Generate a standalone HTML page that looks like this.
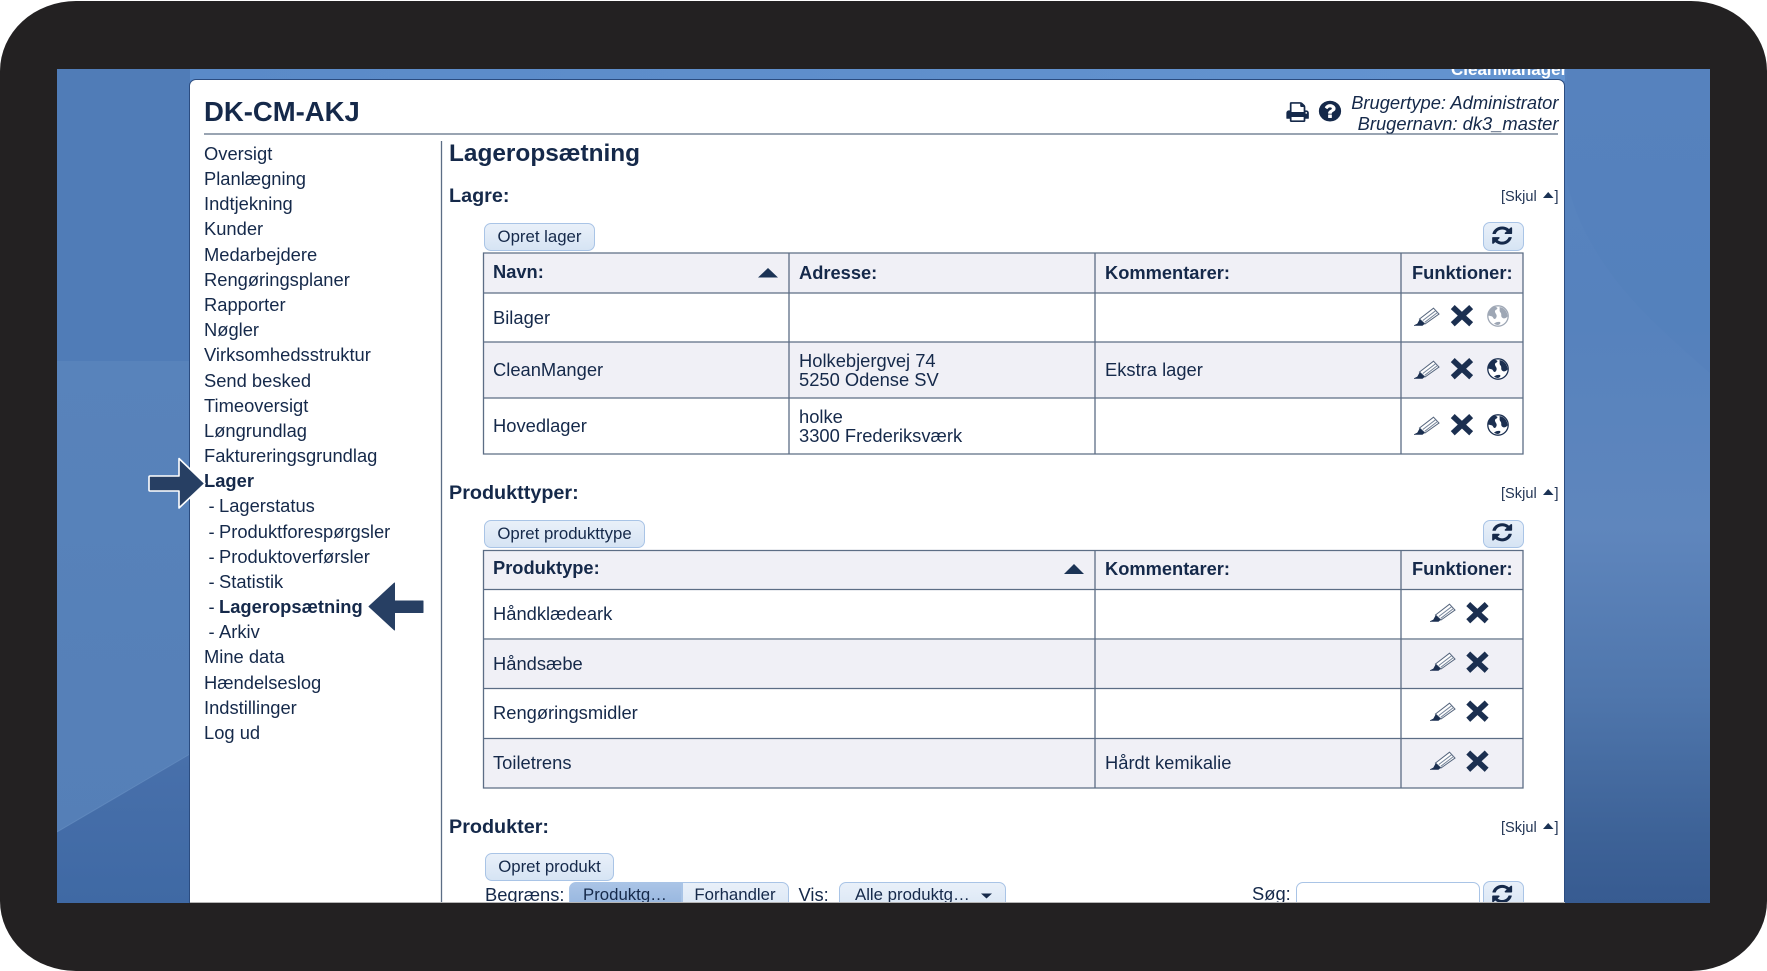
<!DOCTYPE html>
<html lang="da">
<head>
<meta charset="utf-8">
<title>Lageropsætning</title>
<style>
html,body{margin:0;padding:0;background:#fff;width:1767px;height:971px;overflow:hidden}
body{position:relative;font-family:"Liberation Sans",Arial,sans-serif;color:#15294a}
#frame{position:absolute;left:0;top:1px;width:1767px;height:970px;background:#232122;border-radius:76px/70px}
#screen{position:absolute;left:57px;top:69px;width:1653px;height:834px;overflow:hidden;
background:linear-gradient(180deg,#5884c0 0,#5682bd 30%,#5f86bd 55%,#4f76ac 75%,#3d6297 92%,#375b91 100%)}
#abs{position:absolute;left:0;top:0;width:1767px;height:971px;overflow:hidden}
.t{position:absolute;white-space:nowrap;font-size:18.35px;line-height:24px;height:24px}
.b{font-weight:bold}
.h{font-weight:bold;font-size:18.3px}
.sec{font-weight:bold;font-size:19.8px}
.s{font-size:14.6px;color:#1f3252}
.btn{position:absolute;box-sizing:border-box;border:1.5px solid #a9c4e6;border-radius:7px;background:linear-gradient(180deg,#e9f0f9,#d6e4f4);font-size:16.8px;text-align:center;color:#15294a;white-space:nowrap}
#panel{position:absolute;left:189px;top:79px;width:1376px;height:824px;background:#fff;border:1px solid #2b4c80;border-bottom:0;border-radius:7px 7px 0 0;box-sizing:border-box}
svg{position:absolute;left:0;top:0}
</style>
</head>
<body>
<div id="frame"></div>
<div id="screen">
<svg width="1653" height="834" viewBox="57 69 1653 834">
<defs>
<linearGradient id="g1" x1="0" y1="0" x2="0" y2="1"><stop offset="0" stop-color="#5883bb"/><stop offset="1" stop-color="#557fb7"/></linearGradient>
<linearGradient id="g2" x1="0" y1="0" x2="0" y2="1"><stop offset="0" stop-color="#4870ab"/><stop offset="1" stop-color="#3f69a4"/></linearGradient>
<linearGradient id="g3" x1="0" y1="0" x2="1" y2="0"><stop offset="0" stop-color="#5a8ac8"/><stop offset="1" stop-color="#6494d0"/></linearGradient>
</defs>
<rect x="57" y="69" width="133" height="292" fill="#507cb7"/>
<rect x="57" y="361" width="133" height="480" fill="url(#g1)"/>
<path d="M57 832 L190 754 L190 903 L57 903 Z" fill="url(#g2)"/>
<path d="M57 832 L190 754" stroke="#6e95c8" stroke-width="1" opacity=".5" fill="none"/>
<rect x="190" y="69" width="1375" height="12" fill="url(#g3)"/>
<path d="M1567 183 C1590 270 1650 320 1710 373 L1710 69 L1567 69 Z" fill="#4e7cb9" opacity=".2"/>
</svg>
<div class="t b" style="left:1394px;top:-11px;font-size:17px;color:#fff">CleanManager</div>
</div>
<div id="panel"></div>
<div id="abs">
<div class="t b" style="left:204px;top:96px;font-size:27.5px;line-height:32px;height:32px">DK-CM-AKJ</div>
<div class="t" style="right:208.500px;top:91px;font-style:italic">Brugertype: Administrator</div>
<div class="t" style="right:208.500px;top:112px;font-style:italic">Brugernavn: dk3_master</div>

<div class="t" style="left:204px;top:142px">Oversigt</div>
<div class="t" style="left:204px;top:167px">Planlægning</div>
<div class="t" style="left:204px;top:192px">Indtjekning</div>
<div class="t" style="left:204px;top:217px">Kunder</div>
<div class="t" style="left:204px;top:243px">Medarbejdere</div>
<div class="t" style="left:204px;top:268px">Rengøringsplaner</div>
<div class="t" style="left:204px;top:293px">Rapporter</div>
<div class="t" style="left:204px;top:318px">Nøgler</div>
<div class="t" style="left:204px;top:343px">Virksomhedsstruktur</div>
<div class="t" style="left:204px;top:369px">Send besked</div>
<div class="t" style="left:204px;top:394px">Timeoversigt</div>
<div class="t" style="left:204px;top:419px">Løngrundlag</div>
<div class="t" style="left:204px;top:444px">Faktureringsgrundlag</div>
<div class="t b" style="left:204px;top:469px">Lager</div>
<div class="t" style="left:208.500px;top:494px">-</div><div class="t" style="left:219px;top:494px">Lagerstatus</div>
<div class="t" style="left:208.500px;top:520px">-</div><div class="t" style="left:219px;top:520px">Produktforespørgsler</div>
<div class="t" style="left:208.500px;top:545px">-</div><div class="t" style="left:219px;top:545px">Produktoverførsler</div>
<div class="t" style="left:208.500px;top:570px">-</div><div class="t" style="left:219px;top:570px">Statistik</div>
<div class="t" style="left:208.500px;top:595px">-</div><div class="t b" style="left:219px;top:595px">Lageropsætning</div>
<div class="t" style="left:208.500px;top:620px">-</div><div class="t" style="left:219px;top:620px">Arkiv</div>
<div class="t" style="left:204px;top:645px">Mine data</div>
<div class="t" style="left:204px;top:671px">Hændelseslog</div>
<div class="t" style="left:204px;top:696px">Indstillinger</div>
<div class="t" style="left:204px;top:721px">Log ud</div>

<div class="t b" style="left:449px;top:141px;font-size:24.4px;line-height:26px;height:26px">Lageropsætning</div>
<div class="t sec" style="left:449px;top:184px">Lagre:</div>
<div class="t s" style="left:1501px;top:185px">[Skjul</div><div class="t s" style="left:1554.500px;top:185px">]</div>
<div class="t sec" style="left:449px;top:481px">Produkttyper:</div>
<div class="t s" style="left:1501px;top:482px">[Skjul</div><div class="t s" style="left:1554.500px;top:482px">]</div>
<div class="t sec" style="left:449px;top:815px">Produkter:</div>
<div class="t s" style="left:1501px;top:816px">[Skjul</div><div class="t s" style="left:1554.500px;top:816px">]</div>

<div class="btn" style="left:484px;top:223px;width:111px;height:28px;line-height:25px">Opret lager</div>
<div class="btn" style="left:484px;top:520px;width:161px;height:28px;line-height:25px">Opret produkttype</div>
<div class="btn" style="left:485px;top:853px;width:129px;height:28px;line-height:25px">Opret produkt</div>
<div class="btn" style="left:1483px;top:222px;width:41px;height:29px"></div>
<div class="btn" style="left:1483px;top:520px;width:41px;height:28px"></div>

<svg width="1767" height="971" viewBox="0 0 1767 971">
<rect x="484" y="253.500" width="1039" height="40" fill="#f0f0f6"/>
<rect x="484" y="342.500" width="1039" height="55" fill="#f0f0f6"/>
<rect x="484" y="551" width="1039" height="39" fill="#f0f0f6"/>
<rect x="484" y="640" width="1039" height="49" fill="#f0f0f6"/>
<rect x="484" y="739" width="1039" height="49" fill="#f0f0f6"/>
<g stroke="#5c6d85" stroke-width="1.300" fill="none">
<path d="M204 134H1558" stroke-width="1.200"/>
<path d="M441.500 141V903"/>
<path d="M483.500 253H1523V454H483.500Z M483.500 293H1523 M483.500 342H1523 M483.500 398H1523 M789 253V454 M1095 253V454 M1401 253V454"/>
<path d="M483.500 550.500H1523V788H483.500Z M483.500 589.500H1523 M483.500 639H1523 M483.500 688.500H1523 M483.500 738.500H1523 M1095 550.500V788 M1401 550.500V788"/>
</g>
<defs>
<g id="px"><path d="M3.500 3.500L18.500 17.500M18.500 3.500L3.500 17.500" stroke="#1b2f50" stroke-width="6" fill="none" stroke-linecap="square" transform="translate(.5 .2) scale(.95)"/></g>
<g id="pen" fill="none" stroke="#55657d" stroke-width="1"><path d="M5.500 12L19.500 1.200 25 7 11 17Z" fill="#fff"/><path d="M8.800 13.500L21.500 3.800M10.800 15.300L23.500 5.500" stroke="#75849a"/><path d="M0 18.500H8.500L10.500 16.800 5.800 12.500 3.500 16.800Z" fill="#1b2f50" stroke="#1b2f50" stroke-width=".5"/></g>
<g id="globe"><circle cx="11" cy="11" r="10.200" fill="#fff" stroke="#1b2f50" stroke-width="1.300"/><path d="M6 2C3 4 1.500 7 1.200 10.500 3 11.500 5 10.500 6 12.500 7 14.500 8.500 14.500 9.500 12 10.500 9.500 7.500 8 8 6 8.500 4.500 10 5 10.500 3 9 1.500 7.500 1.500 6 2Z M12.500 2C13 4.500 12 6 13.500 7.500 15 9 13.500 11 15 12.500 16.500 14 19 13.500 20.500 11.500 20.500 7 18 3 12.500 2Z M7 18.500C9 17 11 16.500 13 17 14 18 13 19.500 11 20 9.500 20 8 19.500 7 18.500Z" fill="#1b2f50"/></g>
<g id="ref"><path transform="scale(.013 .0118)" fill="#15294a" d="M1639 1056q0 5-1 7-64 268-268 434.500t-478 166.500q-146 0-282.500-55t-243.500-157l-129 129q-19 19-45 19t-45-19-19-45v-448q0-26 19-45t45-19h448q26 0 45 19t19 45-19 45l-137 137q71 66 161 102t187 36q134 0 250-65t186-179q11-17 53-117 8-23 30-23h192q13 0 22.500 9.500t9.500 22.500zm25-800v448q0 26-19 45t-45 19h-448q-26 0-45-19t-19-45 19-45l138-138q-148-137-349-137-134 0-250 65t-186 179q-11 17-53 117-8 23-30 23h-199q-13 0-22.500-9.500t-9.500-22.500v-7q65-268 270-434.500t480-166.500q146 0 284 55.500t245 156.500l130-129q19-19 45-19t45 19 19 45z"/></g>
</defs>
<path transform="translate(1285.500 100.400) scale(.0135 .013)" fill="#15294a" d="M448 1536h896v-256h-896v256zm0-640h896v-384h-160q-40 0-68-28t-28-68v-160h-640v640zm1152 64q0-26-19-45t-45-19-45 19-19 45 19 45 45 19 45-19 19-45zm128 0v416q0 13-9.500 22.500t-22.500 9.500h-224v160q0 40-28 68t-68 28h-960q-40 0-68-28t-28-68v-160h-224q-13 0-22.500-9.500t-9.500-22.500v-416q0-79 56.500-135.500t135.500-56.500h64v-544q0-40 28-68t68-28h672q40 0 88 20t76 48l152 152q28 28 48 76t20 88v256h64q79 0 135.500 56.500t56.500 135.500z"/>
<path transform="translate(1317 99) scale(.0145 .0135)" fill="#15294a" d="M1024 1376v-192q0-14-9-23t-23-9h-192q-14 0-23 9t-9 23v192q0 14 9 23t23 9h192q14 0 23-9t9-23zm256-672q0-88-55.500-163t-138.500-116-170-41q-243 0-371 213-15 24 8 42l132 100q7 6 19 6 16 0 25-12 53-68 86-92 34-24 86-24 48 0 85.500 26t37.500 59q0 38-20 61t-68 45q-63 28-115.500 86.500t-52.500 125.500v36q0 14 9 23t23 9h192q14 0 23-9t9-23q0-19 21.500-49.500t54.500-49.500q32-18 49-28.500t46-35 44.500-48 28-60.500 12.500-81zm384 192q0 209-103 385.500t-279.500 279.500-385.500 103-385.500-103-279.500-279.500-103-385.500 103-385.500 279.500-279.500 385.500-103 385.500 103 279.500 279.500 103 385.500z"/>
<use href="#ref" x="1490.500" y="225"/>
<use href="#ref" x="1490.500" y="521.700"/>
<path d="M758 277.500L768 268 778 277.500Z M1064 574L1074 564 1084 574Z" fill="#1b3355"/>
<path d="M1543 198L1548.200 192 1553.500 198Z M1543 495L1548.200 489 1553.500 495Z M1543 829L1548.200 823 1553.500 829Z" fill="#1b3355"/>
<use href="#pen" x="1414" y="307"/><use href="#px" x="1451" y="305.500"/><use href="#globe" x="1487" y="305" opacity=".42"/>
<use href="#pen" x="1414" y="360"/><use href="#px" x="1451" y="358.500"/><use href="#globe" x="1487" y="358"/>
<use href="#pen" x="1414" y="416"/><use href="#px" x="1451" y="414.500"/><use href="#globe" x="1487" y="414"/>
<use href="#pen" x="1430" y="603"/><use href="#px" x="1466.500" y="602.500"/>
<use href="#pen" x="1430" y="652"/><use href="#px" x="1466.500" y="652"/>
<use href="#pen" x="1430" y="702"/><use href="#px" x="1466.500" y="701"/>
<use href="#pen" x="1430" y="751"/><use href="#px" x="1466.500" y="751"/>
<path d="M150 476H179V458.500L205 483.500 179 508V491H150Q149 491 149 490V477Q149 476 150 476Z" fill="#273f63" stroke="#fff" stroke-width="1.600" stroke-linejoin="round"/>
<path d="M423 601V612.500H394.500V630L369 606.500 394.500 583V601Z" fill="#273f63" stroke="#273f63" stroke-width="1" stroke-linejoin="round"/>
</svg>

<div class="t h" style="left:493px;top:260px">Navn:</div>
<div class="t h" style="left:799px;top:261px">Adresse:</div>
<div class="t h" style="left:1105px;top:261px">Kommentarer:</div>
<div class="t h" style="left:1412px;top:261px">Funktioner:</div>
<div class="t" style="left:493px;top:306px">Bilager</div>
<div class="t" style="left:493px;top:358px">CleanManger</div>
<div class="t" style="left:799px;top:349px">Holkebjergvej 74</div>
<div class="t" style="left:799px;top:368px">5250 Odense SV</div>
<div class="t" style="left:1105px;top:358px">Ekstra lager</div>
<div class="t" style="left:493px;top:414px">Hovedlager</div>
<div class="t" style="left:799px;top:405px">holke</div>
<div class="t" style="left:799px;top:424px">3300 Frederiksværk</div>

<div class="t h" style="left:493px;top:556px">Produktype:</div>
<div class="t h" style="left:1105px;top:557px">Kommentarer:</div>
<div class="t h" style="left:1412px;top:557px">Funktioner:</div>
<div class="t" style="left:493px;top:602px">Håndklædeark</div>
<div class="t" style="left:493px;top:652px">Håndsæbe</div>
<div class="t" style="left:493px;top:701px">Rengøringsmidler</div>
<div class="t" style="left:493px;top:751px">Toiletrens</div>
<div class="t" style="left:1105px;top:751px">Hårdt kemikalie</div>
</div>

<div id="clip" style="position:absolute;left:191px;top:876px;width:1373px;height:27px;overflow:hidden">
<div class="t" style="left:294px;top:7px">Begræns:</div>
<div class="btn" style="left:377.500px;top:6px;width:113px;height:34px;border-radius:7px 0 0 7px;line-height:23px;background:linear-gradient(180deg,#aac4e6,#8fb0dc)">Produktg…</div>
<div class="btn" style="left:490.500px;top:6px;width:107px;height:34px;border-radius:0 7px 7px 0;line-height:23px">Forhandler</div>
<div class="t" style="left:607.500px;top:7px">Vis:</div>
<div class="btn" style="left:648px;top:6px;width:167px;height:34px;line-height:23px;text-align:left;padding-left:15px">Alle produktg…</div>
<div class="t" style="left:1061px;top:6px">Søg:</div>
<div class="btn" style="left:1105px;top:6px;width:184px;height:34px;background:#fff"></div>
<div class="btn" style="left:1292px;top:5px;width:41px;height:34px"></div>
</div>
<svg width="1767" height="971" viewBox="0 0 1767 971" style="pointer-events:none">
<use href="#ref" x="1490.500" y="883.400"/>
<path d="M981 893.500H992L986.500 898.500Z" fill="#15294a"/>
<path d="M190 902.500H1565" stroke="#b5b5b5" stroke-width="1"/>
<rect x="57" y="903" width="1653" height="14" fill="#232122"/>
</svg>
</body>
</html>
